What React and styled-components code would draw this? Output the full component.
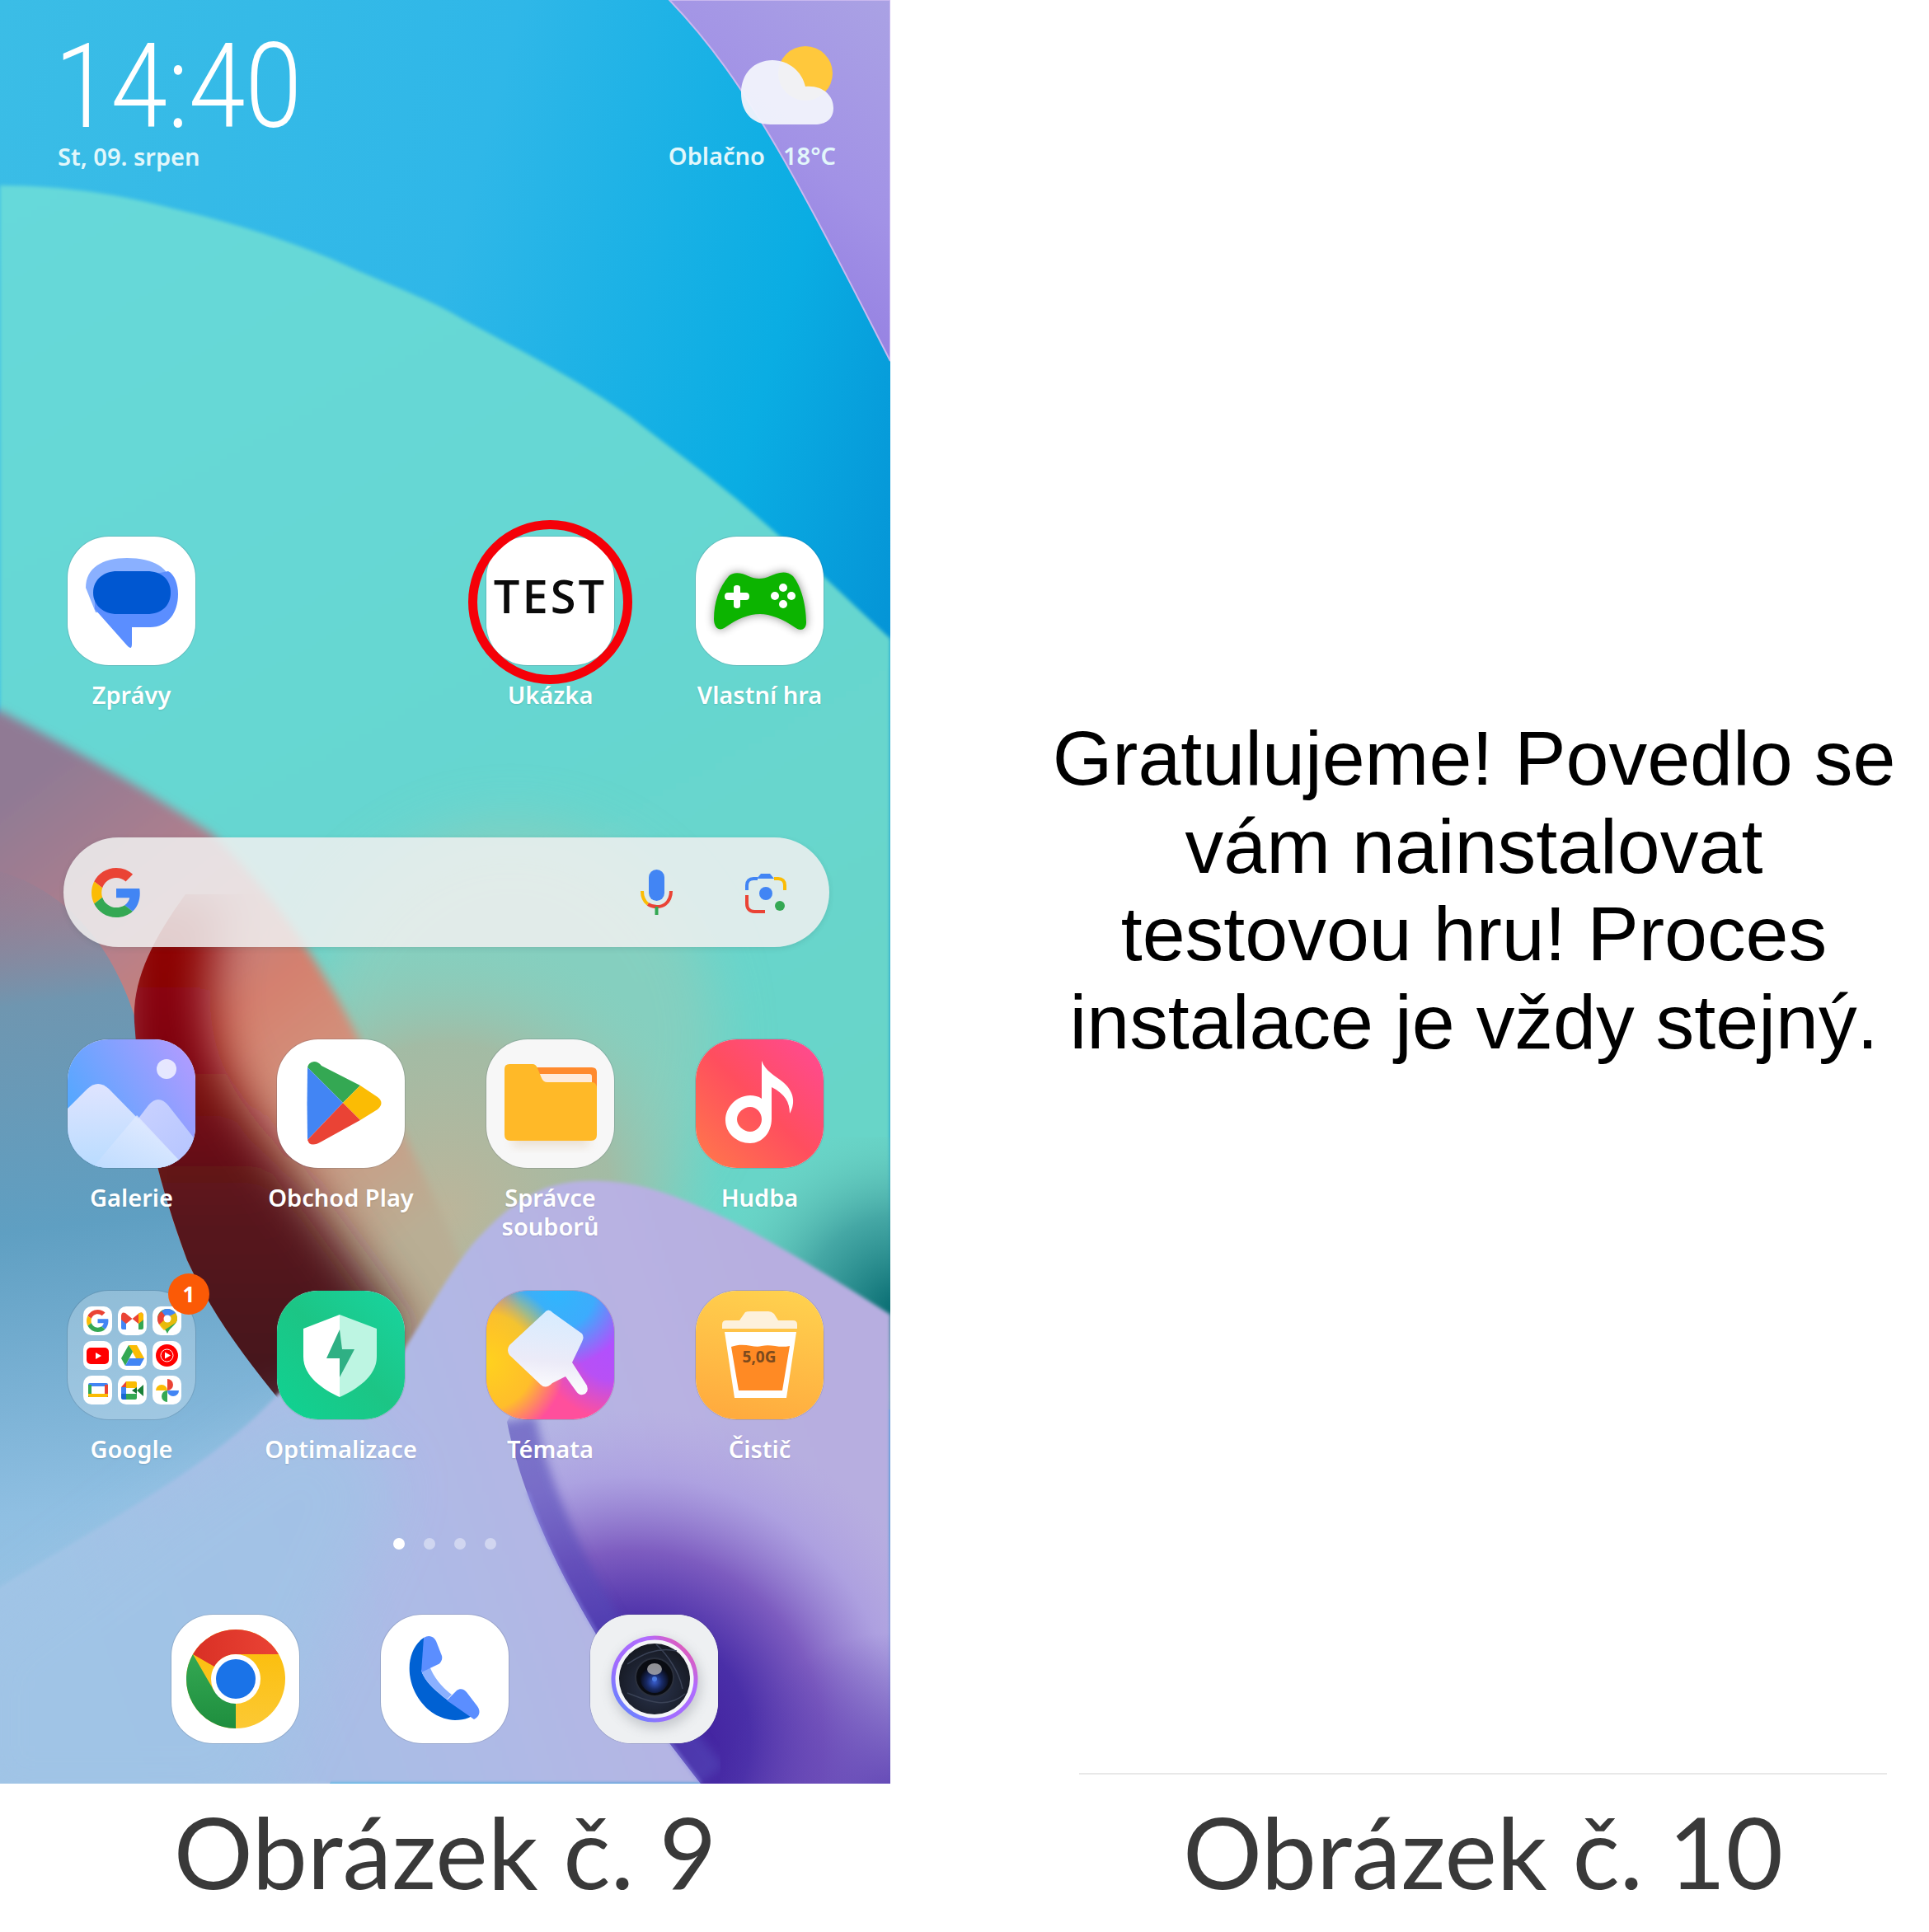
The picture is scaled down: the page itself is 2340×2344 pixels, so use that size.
import React from "react";
import styled, { createGlobalStyle } from "styled-components";

const Global = createGlobalStyle`
  html, body { margin: 0; padding: 0; background: #fff; }
  #root { width: 2340px; height: 2344px; overflow: hidden; }
`;

const Page = styled.div`
  display: grid;
  grid-template-columns: 1080px 1260px;
  width: 2340px;
  height: 2344px;
  background: #fff;
`;
const LeftColumn = styled.div`
  display: flex;
  flex-direction: column;
`;
const RightColumn = styled.div`
  display: flex;
  flex-direction: column;
`;
const Phone = styled.div`
  position: relative;
  width: 1080px;
  height: 2164px;
  overflow: hidden;
  font-family: "Noto Sans", sans-serif;
`;
const WallpaperSvg = styled.svg`
  position: absolute;
  inset: 0;
`;
const Screen = styled.div`
  position: relative;
  display: flex;
  flex-direction: column;
  height: 100%;
`;
const Header = styled.header`
  display: flex;
  justify-content: space-between;
  height: 651px;
  padding: 0 66px 0 66px;
  box-sizing: border-box;
`;
const ClockBlock = styled.div`
  display: flex;
  flex-direction: column;
  padding-top: 46px;
`;
const Clock = styled.div`
  font-family: Roboto, sans-serif;
  font-weight: 300;
  font-size: 142px;
  line-height: 120px;
  height: 120px;
  color: #fff;
  transform: scaleX(0.87);
  transform-origin: left center;
  white-space: nowrap;
`;
const SmallInfo = styled.div`
  font-size: 29px;
  font-weight: 600;
  line-height: 36px;
  color: #e2f7fb;
  white-space: nowrap;
`;
const DateLine = styled(SmallInfo)`
  margin: 6px 0 0 4px;
`;
const WeatherBlock = styled.div`
  display: flex;
  flex-direction: column;
  align-items: flex-end;
  padding-top: 53px;
`;
const WeatherIcon = styled.svg`
  width: 120px;
  height: 100px;
  margin-right: -3px;
`;
const WeatherText = styled.div`
  display: flex;
  gap: 22px;
  margin-top: 18px;
`;
const AppGrid = styled.div`
  display: grid;
  grid-template-columns: repeat(4, 155px);
  column-gap: 99px;
  padding-left: 82px;
`;
const TopGrid = styled(AppGrid)`
  height: 365px;
`;
const MainGrid = styled(AppGrid)`
  grid-auto-rows: 305px;
  margin-top: 112px;
  height: 605px;
`;
const Cell = styled.div`
  display: flex;
  flex-direction: column;
  align-items: center;
`;
const Tile = styled.div`
  position: relative;
  width: 155px;
  height: 156px;
  border-radius: 50px;
  background: ${(p) => p.$bg || "#fff"};
  flex: none;
  box-shadow: 0 0 0 1px rgba(60, 70, 90, 0.18);
`;
const TileSvg = styled.svg`
  display: block;
  width: 155px;
  height: 156px;
  border-radius: 50px;
`;
const Label = styled.div`
  margin-top: 18px;
  font-size: 29px;
  font-weight: 600;
  line-height: 35px;
  color: #fff;
  text-align: center;
  white-space: nowrap;
  text-shadow: 0 1px 2px rgba(0, 0, 0, 0.12);
`;
const TestMark = styled.div`
  padding-top: 46px;
  font-family: "Open Sans", sans-serif;
  font-size: 56px;
  font-weight: 600;
  line-height: 50px;
  letter-spacing: 3px;
  text-align: center;
  color: #0a0a0a;
`;
const RedRing = styled.div`
  position: absolute;
  left: -22px;
  top: -20px;
  width: 199px;
  height: 199px;
  box-sizing: border-box;
  border: 11px solid #f50008;
  border-radius: 50%;
`;
const SearchBar = styled.div`
  display: flex;
  align-items: center;
  width: 929px;
  height: 133px;
  margin-left: 77px;
  padding: 0 52px 0 34px;
  box-sizing: border-box;
  border-radius: 67px;
  background: rgba(240, 240, 240, 0.86);
  box-shadow: 0 2px 6px rgba(40, 80, 80, 0.15);
`;
const SearchSpacer = styled.div`
  flex: 1;
`;
const SearchGap = styled.div`
  width: 88px;
`;
const FolderTile = styled(Tile)`
  display: grid;
  grid-template-columns: repeat(3, 35px);
  grid-auto-rows: 35px;
  gap: 7px;
  padding: 19px 0 0 19px;
  box-sizing: border-box;
  background: rgba(225, 235, 245, 0.32);
`;
const MiniTile = styled.div`
  display: flex;
  align-items: center;
  justify-content: center;
  width: 35px;
  height: 35px;
  border-radius: 10px;
  background: #fff;
`;
const Badge = styled.div`
  position: absolute;
  left: 122px;
  top: -21px;
  width: 50px;
  height: 50px;
  border-radius: 50%;
  background: #fb5a06;
  color: #fff;
  font-size: 26px;
  font-weight: 700;
  line-height: 50px;
  text-align: center;
`;
const Pager = styled.div`
  display: flex;
  gap: 23px;
  height: 14px;
  padding-left: 477px;
`;
const Dot = styled.div`
  width: 14px;
  height: 14px;
  border-radius: 50%;
  background: ${(p) => (p.$active ? "#fff" : "rgba(255,255,255,0.42)")};
`;
const Dock = styled.div`
  display: grid;
  grid-template-columns: repeat(3, 155px);
  column-gap: 99px;
  margin-top: 79px;
  padding-left: 208px;
`;
const Caption = styled.div`
  font-family: Lato, sans-serif;
  font-size: 120px;
  font-weight: 400;
  line-height: 164px;
  color: #393939;
  text-align: center;
  white-space: nowrap;
`;
const RightCanvas = styled.div`
  height: 2164px;
  display: flex;
  flex-direction: column;
`;
const Message = styled.div`
  margin: 867px 0 0 163px;
  width: 1090px;
  font-family: "Liberation Sans", Arial, sans-serif;
  font-size: 93.4px;
  line-height: 106.5px;
  color: #000;
  text-align: center;
  white-space: nowrap;
`;
const Divider = styled.div`
  margin: auto 0 11px 229px;
  width: 980px;
  height: 2px;
  background: #e8e8e8;
`;
const RightCaption = styled(Caption)`
  padding-left: 178px;
`;

const Wallpaper = () => (
  <WallpaperSvg width="1080" height="2164" viewBox="0 0 1080 2164">
    <defs>
      <linearGradient id="wpBase" x1="0" y1="0" x2="1" y2="0.55">
        <stop offset="0" stopColor="#3bbde6" />
        <stop offset="0.45" stopColor="#2fb7e8" />
        <stop offset="0.75" stopColor="#0aade3" />
        <stop offset="1" stopColor="#0288d0" />
      </linearGradient>
      <linearGradient id="wpPurple" x1="1" y1="0" x2="0.5" y2="1">
        <stop offset="0" stopColor="#aaa2e4" />
        <stop offset="0.5" stopColor="#a292e6" />
        <stop offset="1" stopColor="#8f78e0" />
      </linearGradient>
      <linearGradient id="wpTeal" x1="0" y1="0" x2="0.4" y2="1">
        <stop offset="0" stopColor="#66d9da" />
        <stop offset="0.5" stopColor="#66d7d2" />
        <stop offset="1" stopColor="#68d5c8" />
      </linearGradient>
      <linearGradient id="wpLobe" gradientUnits="userSpaceOnUse" x1="60" y1="930" x2="500" y2="1500">
        <stop offset="0" stopColor="#907a94" />
        <stop offset="0.3" stopColor="#b5808c" />
        <stop offset="0.52" stopColor="#d4806e" />
        <stop offset="0.72" stopColor="#d2957f" />
        <stop offset="1" stopColor="#b9ae94" />
      </linearGradient>
      <radialGradient id="wpTan" gradientUnits="userSpaceOnUse" cx="540" cy="1470" r="340">
        <stop offset="0" stopColor="#bcb59a" />
        <stop offset="0.6" stopColor="#a8b8a0" stopOpacity="0.85" />
        <stop offset="1" stopColor="#8ccfbc" stopOpacity="0" />
      </radialGradient>
      <linearGradient id="wpDark" gradientUnits="userSpaceOnUse" x1="0" y1="1130" x2="0" y2="1680">
        <stop offset="0" stopColor="#900003" />
        <stop offset="0.3" stopColor="#7c060c" />
        <stop offset="0.6" stopColor="#5a161c" />
        <stop offset="1" stopColor="#44181f" />
      </linearGradient>
      <linearGradient id="wpBlue" gradientUnits="userSpaceOnUse" x1="0" y1="1040" x2="140" y2="2164">
        <stop offset="0" stopColor="#7f7f98" stopOpacity="0" />
        <stop offset="0.16" stopColor="#6f96b0" />
        <stop offset="0.4" stopColor="#5f9fc2" />
        <stop offset="0.7" stopColor="#8fbfe2" />
        <stop offset="1" stopColor="#a6c8e6" />
      </linearGradient>
      <linearGradient id="wpLav" gradientUnits="userSpaceOnUse" x1="100" y1="2000" x2="1000" y2="1700">
        <stop offset="0" stopColor="#a0c4e6" />
        <stop offset="0.45" stopColor="#aebae6" />
        <stop offset="0.8" stopColor="#b8b2e2" />
        <stop offset="1" stopColor="#b7aee0" />
      </linearGradient>
      <radialGradient id="wpFold" gradientUnits="userSpaceOnUse" cx="770" cy="2110" r="400">
        <stop offset="0" stopColor="#3a1496" />
        <stop offset="0.35" stopColor="#4a2fa8" />
        <stop offset="0.57" stopColor="#7d5cc0" />
        <stop offset="0.8" stopColor="#a99ae0" stopOpacity="0.7" />
        <stop offset="1" stopColor="#b2a2e2" stopOpacity="0" />
      </radialGradient>
      <radialGradient id="wpFoldCorner" gradientUnits="userSpaceOnUse" cx="1090" cy="2200" r="220">
        <stop offset="0" stopColor="#5a3cb0" />
        <stop offset="1" stopColor="#5a3cb0" stopOpacity="0" />
      </radialGradient>
      <radialGradient id="wpDeepTeal" gradientUnits="userSpaceOnUse" cx="1090" cy="1590" r="230">
        <stop offset="0" stopColor="#05696f" />
        <stop offset="0.5" stopColor="#3c9c9c" stopOpacity="0.8" />
        <stop offset="1" stopColor="#6fcdbd" stopOpacity="0" />
      </radialGradient>
      <filter id="blurS"><feGaussianBlur stdDeviation="2" /></filter>
      <filter id="blurE" x="-10%" y="-10%" width="120%" height="120%"><feGaussianBlur stdDeviation="6" /></filter>
      <filter id="blurM" x="-30%" y="-30%" width="160%" height="160%"><feGaussianBlur stdDeviation="28" /></filter>
      <filter id="blurL" x="-30%" y="-30%" width="160%" height="160%"><feGaussianBlur stdDeviation="34" /></filter>
      <clipPath id="clipDark"><path d="M225,1085 C185,1140 160,1190 163,1240 C170,1340 190,1430 227,1529 C260,1600 300,1650 340,1700 L620,1700 L620,1085 Z" /></clipPath>
      <clipPath id="clipFold"><path d="M615,1725 C640,1850 720,2000 850,2164 L1080,2164 L1080,1560 L700,1560 Z" /></clipPath>
    </defs>
    <rect width="1080" height="2164" fill="url(#wpBase)" />
    <path d="M812,0 C860,50 900,105 951,194 C1000,280 1040,360 1080,438 L1080,0 Z" fill="url(#wpPurple)" stroke="#c9b8ef" strokeWidth="2" />
    <path
      d="M0,225 C80,225 150,237 210,253 C290,272 360,295 420,322 C470,345 515,360 561,387 C640,430 700,460 764,505 C815,545 865,580 913,622 C960,662 1000,700 1040,738 L1080,775 L1080,1700 L0,1700 Z"
      fill="url(#wpTeal)"
      filter="url(#blurS)"
    />
    <rect x="860" y="1380" width="300" height="330" fill="url(#wpDeepTeal)" />
    <ellipse cx="620" cy="1260" rx="250" ry="260" fill="#8fcdbb" opacity="0.75" filter="url(#blurL)" />
    <rect x="200" y="1130" width="680" height="680" fill="url(#wpTan)" />
    <path
      d="M0,862 C110,920 180,960 255,1010 C330,1080 390,1170 433,1256 C470,1340 520,1430 560,1530 L490,1660 L330,1720 L-20,1720 L-20,862 Z"
      fill="url(#wpLobe)"
      filter="url(#blurE)"
    />
    <path
      d="M-40,1050 C60,1060 130,1130 163,1232 C170,1340 190,1430 227,1529 C260,1600 300,1650 340,1690 L560,1800 L400,2164 L-40,2164 Z"
      fill="url(#wpBlue)"
    />
    <g clipPath="url(#clipDark)">
      <path d="M140,1090 L275,1090 C245,1190 245,1270 300,1345 C350,1420 410,1500 490,1610 L430,1760 L140,1760 Z" fill="url(#wpDark)" filter="url(#blurM)" />
    </g>
    <path
      d="M-40,2164 L-40,1950 C120,1850 260,1780 340,1688 C380,1720 440,1720 490,1638 C520,1590 545,1545 572,1511 C600,1480 620,1460 660,1442 C690,1432 715,1431 745,1434 C790,1438 830,1455 880,1478 C930,1502 1010,1550 1080,1595 L1080,2164 Z"
      fill="url(#wpLav)"
      filter="url(#blurS)"
    />
    <path d="M-40,2000 C120,1880 280,1760 380,1700 L480,1800 L300,2200 L-40,2200 Z" fill="#a0c4e6" opacity="0.7" filter="url(#blurL)" />
    <g clipPath="url(#clipFold)">
      <rect x="600" y="1560" width="480" height="604" fill="url(#wpFold)" />
      <rect x="850" y="1960" width="240" height="204" fill="url(#wpFoldCorner)" />
      <path d="M615,1725 C640,1850 720,2000 850,2164" fill="none" stroke="#5548b8" strokeWidth="70" opacity="0.6" filter="url(#blurE)" />
    </g>
    <path d="M640,1810 C670,1900 740,2020 850,2164" fill="none" stroke="#8f8fe6" strokeWidth="3" opacity="0.7" filter="url(#blurS)" />
  </WallpaperSvg>
);

const GoogleG = ({ size = 48 }) => (
  <svg width={size} height={size} viewBox="0 0 48 48">
    <path fill="#EA4335" d="M24 9.5c3.54 0 6.71 1.22 9.21 3.6l6.85-6.85C35.9 2.38 30.47 0 24 0 14.62 0 6.51 5.38 2.56 13.22l7.98 6.19C12.43 13.72 17.74 9.5 24 9.5z" />
    <path fill="#4285F4" d="M46.98 24.55c0-1.57-.15-3.09-.38-4.55H24v9.02h12.94c-.58 2.96-2.26 5.48-4.78 7.18l7.73 6c4.51-4.18 7.09-10.36 7.09-17.65z" />
    <path fill="#FBBC05" d="M10.53 28.59c-.48-1.45-.76-2.99-.76-4.59s.27-3.14.76-4.59l-7.98-6.19C.92 16.46 0 20.12 0 24c0 3.88.92 7.54 2.56 10.78l7.97-6.19z" />
    <path fill="#34A853" d="M24 48c6.48 0 11.93-2.13 15.89-5.81l-7.73-6c-2.15 1.45-4.92 2.3-8.16 2.3-6.26 0-11.57-4.22-13.47-9.91l-7.98 6.19C6.51 42.62 14.62 48 24 48z" />
  </svg>
);

const Mic = () => (
  <svg width="39" height="55" viewBox="0 0 39 55">
    <rect x="10" y="0" width="19" height="38" rx="9.5" fill="#4285F4" />
    <path d="M2,26 C2,34 5,39 9,42" fill="none" stroke="#FBBC05" strokeWidth="4" />
    <path d="M9,42 C15,46 25,46 30,42 C35,38 37,33 37,26" fill="none" stroke="#EA4335" strokeWidth="4" />
    <rect x="17.5" y="45" width="4" height="10" fill="#34A853" />
  </svg>
);

const Lens = () => (
  <svg width="50" height="50" viewBox="0 0 50 50">
    <path d="M2,22 V16 C2,11 5,8 10,8 H15" fill="none" stroke="#4285F4" strokeWidth="4" />
    <path d="M14,8 L19,2 H30 L35,8 Z" fill="#4285F4" />
    <path d="M35,8 H40 C45,8 48,11 48,16 V22" fill="none" stroke="#FBBC05" strokeWidth="4" />
    <path d="M2,28 V38 C2,44 5,48 11,48 H24" fill="none" stroke="#EA4335" strokeWidth="4" />
    <circle cx="25" cy="26" r="8" fill="#4285F4" />
    <circle cx="42" cy="41" r="6" fill="#34A853" />
  </svg>
);

const MessagesArt = () => (
  <TileSvg viewBox="0 0 155 156">
    <path d="M22,62 C22,38 42,26 72,26 C104,26 125,38 125,60 L110,92 L34,92 Z" fill="#8ab0ff" />
    <path d="M33,88 L72,132 Q78,139 78,130 L78,110 L100,110 C122,110 134,92 134,70 C134,58 130,46 122,42 L33,60 Z" fill="#5b8eff" />
    <path d="M31,68 C31,52 44,42 60,42 H96 C114,42 125,52 125,68 C125,84 114,94 96,94 H60 C44,94 31,84 31,68 Z" fill="#0057d1" />
  </TileSvg>
);

const GameArt = () => (
  <TileSvg viewBox="0 0 155 156">
    <defs>
      <filter id="gameShadow" x="-20%" y="-30%" width="140%" height="160%"><feGaussianBlur stdDeviation="6" /></filter>
    </defs>
    <path d="M22,100 C22,80 28,62 40,48 C46,42 56,44 64,48 C72,52 82,52 90,48 C98,44 110,40 118,48 C128,60 134,84 134,104 C134,112 128,116 120,110 C106,100 90,94 78,94 C64,94 50,100 36,110 C28,116 22,110 22,100 Z" fill="#000" opacity="0.45" filter="url(#gameShadow)" />
    <path d="M22,100 C22,80 28,62 40,48 C46,42 56,44 64,48 C72,52 82,52 90,48 C98,44 110,40 118,48 C128,60 134,84 134,104 C134,112 128,116 120,110 C106,100 90,94 78,94 C64,94 50,100 36,110 C28,116 22,110 22,100 Z" fill="#0cb400" />
    <path d="M46,62 V68 H39 Q35,68 35,72.5 Q35,77 39,77 H46 V84 Q46,87 50,87 Q54,87 54,84 V77 H61 Q65,77 65,72.5 Q65,68 61,68 H54 V62 Q54,59 50,59 Q46,59 46,62 Z" fill="#fff" />
    <circle cx="106" cy="62" r="5" fill="#fff" />
    <circle cx="106" cy="82" r="5" fill="#fff" />
    <circle cx="96" cy="72" r="5" fill="#fff" />
    <circle cx="116" cy="72" r="5" fill="#fff" />
  </TileSvg>
);

const GalleryArt = () => (
  <TileSvg viewBox="0 0 155 156">
    <defs>
      <linearGradient id="galBg" x1="0" y1="0.6" x2="1" y2="0">
        <stop offset="0" stopColor="#4fa8ff" />
        <stop offset="1" stopColor="#b89aff" />
      </linearGradient>
      <linearGradient id="galM1" x1="0" y1="0" x2="0" y2="1">
        <stop offset="0" stopColor="#dfe4ff" />
        <stop offset="1" stopColor="#b9dcff" />
      </linearGradient>
      <linearGradient id="galM2" x1="0" y1="0" x2="1" y2="1">
        <stop offset="0" stopColor="#cdd4ff" />
        <stop offset="1" stopColor="#b4c4ff" />
      </linearGradient>
      <linearGradient id="galM3" x1="1" y1="0" x2="0" y2="1">
        <stop offset="0" stopColor="#eef0ff" />
        <stop offset="1" stopColor="#c0dcff" />
      </linearGradient>
    </defs>
    <rect width="155" height="156" fill="url(#galBg)" />
    <ellipse cx="120" cy="36" rx="12" ry="12" fill="#fff" opacity="0.75" />
    <path d="M155,122 L122,80 Q110,66 98,80 L60,130 L90,156 L155,156 Z" fill="url(#galM2)" />
    <path d="M0,84 L24,60 Q37,48 50,60 L144,156 L0,156 Z" fill="url(#galM1)" />
    <path d="M84,92 L144,156 L30,156 Z" fill="url(#galM3)" opacity="0.8" />
  </TileSvg>
);

const PlayArt = () => (
  <TileSvg viewBox="0 0 155 156">
    <path d="M37,34 Q38,28 45,27 Q50,27 54,32 L101,56 L80,77 Z" fill="#34a853" />
    <path d="M37,34 L80,77 L37,122 Q36,78 37,34 Z" fill="#4285f4" />
    <path d="M101,56 L122,70 Q131,77 122,85 L101,98 L80,77 Z" fill="#fbbc04" />
    <path d="M37,122 L80,77 L101,98 L54,124 Q44,130 39,126 Z" fill="#ea4335" />
  </TileSvg>
);

const FilesArt = () => (
  <TileSvg viewBox="0 0 155 156">
    <defs>
      <filter id="fileShadow" x="-20%" y="-20%" width="140%" height="150%"><feGaussianBlur stdDeviation="6" /></filter>
    </defs>
    <rect x="32" y="104" width="92" height="26" fill="#c9a070" opacity="0.25" filter="url(#fileShadow)" />
    <path d="M50,34 H128 Q134,34 134,40 V70 H50 Z" fill="#ff8a2e" />
    <rect x="62" y="42" width="66" height="30" rx="3" fill="#ffeadb" />
    <path d="M28,30 H56 Q60,30 62,35 L67,47 Q69,52 74,52 H128 Q134,52 134,60 V116 Q134,123 127,123 H29 Q22,123 22,116 V36 Q22,30 28,30 Z" fill="#ffb928" />
  </TileSvg>
);

const MusicArt = () => (
  <TileSvg viewBox="0 0 155 156">
    <defs>
      <linearGradient id="musBg" x1="0" y1="1" x2="1" y2="0">
        <stop offset="0" stopColor="#ff7a4a" />
        <stop offset="0.5" stopColor="#ff4e5e" />
        <stop offset="1" stopColor="#ff4a96" />
      </linearGradient>
    </defs>
    <rect width="155" height="156" fill="url(#musBg)" />
    <path fillRule="evenodd" d="M80,26 C84,38 96,44 106,52 C118,62 122,76 114,90 C114,76 108,66 92,58 L92,96 C92,114 80,126 66,126 C50,126 36,114 36,98 C36,82 50,68 66,68 C71,68 76,69 80,72 Z M66,82 C58,82 50,89 50,97 C50,105 58,112 66,112 C74,112 80,105 80,97 C80,89 74,82 66,82 Z" fill="#fff" />
  </TileSvg>
);

const ShieldArt = () => (
  <TileSvg viewBox="0 0 155 156">
    <defs>
      <linearGradient id="shBg" x1="0" y1="1" x2="1" y2="0">
        <stop offset="0" stopColor="#0fd393" />
        <stop offset="0.5" stopColor="#1cc585" />
        <stop offset="1" stopColor="#18d5a0" />
      </linearGradient>
    </defs>
    <rect width="155" height="156" fill="url(#shBg)" />
    <path d="M76,29 L32,46 V80 C32,104 56,120 76,129 Z" fill="#fff" />
    <path d="M76,29 L121,46 V80 C121,104 96,120 76,129 Z" fill="#bdf5e2" />
    <path d="M76,47 L60,82 H76 V105 L94,71 H79 Z" fill="#2fb084" />
  </TileSvg>
);

const ThemesArt = () => (
  <TileSvg viewBox="0 0 155 156">
    <defs>
      <radialGradient id="thY" cx="0" cy="0.55" r="0.62">
        <stop offset="0" stopColor="#ffd21e" />
        <stop offset="0.6" stopColor="#ffca1e" stopOpacity="0.9" />
        <stop offset="1" stopColor="#ffca1e" stopOpacity="0" />
      </radialGradient>
      <radialGradient id="thB" cx="0.55" cy="0" r="0.6">
        <stop offset="0" stopColor="#2eb6ff" />
        <stop offset="0.5" stopColor="#2eb6ff" stopOpacity="0.9" />
        <stop offset="1" stopColor="#2eb6ff" stopOpacity="0" />
      </radialGradient>
      <radialGradient id="thP" cx="1" cy="0.4" r="0.6">
        <stop offset="0" stopColor="#b050ff" />
        <stop offset="0.5" stopColor="#b050ff" stopOpacity="0.9" />
        <stop offset="1" stopColor="#b050ff" stopOpacity="0" />
      </radialGradient>
      <linearGradient id="thBrush" x1="0.5" y1="0" x2="0.4" y2="1">
        <stop offset="0" stopColor="#d6ecff" />
        <stop offset="0.6" stopColor="#ecebf8" />
        <stop offset="1" stopColor="#fff" />
      </linearGradient>
    </defs>
    <rect width="155" height="156" fill="#ff4f9c" />
    <rect width="155" height="156" fill="url(#thP)" />
    <rect width="155" height="156" fill="url(#thB)" />
    <rect width="155" height="156" fill="url(#thY)" />
    <path d="M70,27 Q75,20 81,27 L116,52 Q119,56 116,62 L104,87 L122,115 Q125,124 117,126 Q112,127 109,122 L96,104 L80,112 Q72,120 66,114 L28,78 Q24,72 28,66 Z" fill="url(#thBrush)" />
  </TileSvg>
);

const CleanerCup = styled.text`
  font-family: "Noto Sans", sans-serif;
  font-size: 19px;
  font-weight: 700;
  fill: #7c4a1e;
`;

const CleanerArt = () => (
  <TileSvg viewBox="0 0 155 156">
    <defs>
      <linearGradient id="clBg" x1="0.6" y1="0" x2="0.4" y2="1">
        <stop offset="0" stopColor="#ffd04e" />
        <stop offset="1" stopColor="#ffab3e" />
      </linearGradient>
    </defs>
    <rect width="155" height="156" fill="url(#clBg)" />
    <path d="M53,36 L60,26 Q62,25 66,25 H88 Q92,25 95,28 L100,36 H118 Q123,36 123,41 V46 H32 V41 Q32,36 37,36 Z" fill="#fdf1dc" />
    <path d="M35,50 H122 L110,130 H47 Z" fill="#fff" />
    <path d="M43,68 C60,62 70,70 80,67 C92,64 100,70 114,67 L105,121 H52 Z" fill="#ff8a24" />
    <CleanerCup x="77" y="87" textAnchor="middle">5,0G</CleanerCup>
  </TileSvg>
);

const ChromeArt = () => (
  <TileSvg viewBox="0 0 155 156">
    <defs>
      <linearGradient id="chR" x1="0" y1="0" x2="1" y2="0">
        <stop offset="0" stopColor="#d93025" />
        <stop offset="1" stopColor="#ea4335" />
      </linearGradient>
      <linearGradient id="chG" x1="0.3" y1="1" x2="0.3" y2="0">
        <stop offset="0" stopColor="#1e8e3e" />
        <stop offset="1" stopColor="#34a853" />
      </linearGradient>
      <linearGradient id="chY" x1="0.5" y1="1" x2="0.5" y2="0">
        <stop offset="0" stopColor="#fcc934" />
        <stop offset="1" stopColor="#fbbc04" />
      </linearGradient>
    </defs>
    <circle cx="78" cy="78" r="60" fill="url(#chY)" />
    <path d="M78,18 A60,60 0 0 1 130,48 L78,48 A30,30 0 0 0 52,63 L26,48 A60,60 0 0 1 78,18 Z" fill="url(#chR)" />
    <path d="M26,48 L52,93 L78,108 L78,138 A60,60 0 0 1 26,48 Z" fill="url(#chG)" />
    <circle cx="78" cy="78" r="30" fill="#fff" />
    <circle cx="78" cy="78" r="24" fill="#1a73e8" />
  </TileSvg>
);

const PhoneArt = () => (
  <TileSvg viewBox="0 0 155 156">
    <path d="M52,28 C40,36 33,52 35,72 C38,100 60,127 90,128 C102,128 112,124 116,118 L80,103 C66,92 54,82 49,68 L56,58 Z" fill="#0061d3" />
    <path d="M49,68 C54,82 66,92 80,103 L86,97 C74,88 64,76 59,62 Z" fill="#8ab0ff" />
    <path d="M52,28 C58,24 64,26 67,32 L74,50 C75,54 73,58 70,60 L49,70 Z" fill="#5b8eff" />
    <path d="M80,104 L92,92 C96,89 101,90 104,94 L117,111 C122,118 119,124 113,127 Z" fill="#5b8eff" />
  </TileSvg>
);

const CameraArt = () => (
  <TileSvg viewBox="0 0 155 156">
    <defs>
      <linearGradient id="camRing" x1="0" y1="1" x2="1" y2="0">
        <stop offset="0" stopColor="#4f8cff" />
        <stop offset="0.35" stopColor="#a06cff" />
        <stop offset="0.7" stopColor="#b06cff" />
        <stop offset="1" stopColor="#ff4f8e" />
      </linearGradient>
      <radialGradient id="camLens" cx="0.5" cy="0.6" r="0.6">
        <stop offset="0" stopColor="#2b3550" />
        <stop offset="1" stopColor="#151820" />
      </radialGradient>
      <radialGradient id="camGlass" cx="0.5" cy="0.6" r="0.55">
        <stop offset="0" stopColor="#3a5fd0" />
        <stop offset="0.5" stopColor="#182a66" />
        <stop offset="1" stopColor="#080a14" />
      </radialGradient>
      <filter id="camShadow" x="-30%" y="-30%" width="160%" height="160%"><feGaussianBlur stdDeviation="7" /></filter>
    </defs>
    <rect width="155" height="156" fill="#eef0f2" />
    <circle cx="80" cy="84" r="54" fill="#8a8f98" opacity="0.4" filter="url(#camShadow)" />
    <circle cx="78" cy="78" r="50" fill="#f4f5f7" stroke="url(#camRing)" strokeWidth="5" />
    <circle cx="78" cy="78" r="43" fill="url(#camLens)" />
    <path d="M45,60 C60,50 80,38 105,44 M45,95 C60,100 90,118 115,96 M80,36 C95,50 108,70 112,90" fill="none" stroke="#3a4256" strokeWidth="1.5" />
    <circle cx="78" cy="76" r="23" fill="#0a0c12" stroke="#2a2f3c" strokeWidth="2" />
    <circle cx="78" cy="78" r="17" fill="url(#camGlass)" />
    <ellipse cx="78" cy="66" rx="9" ry="7" fill="#a8a8ac" opacity="0.85" />
    <circle cx="78" cy="78" r="3" fill="#4a7ae0" />
  </TileSvg>
);

const Mini = {
  Gmail: () => (
    <svg width="27" height="21" viewBox="0 0 27 21">
      <path d="M0,5 V19 Q0,21 2,21 H6 V9 Z" fill="#4285f4" />
      <path d="M27,5 V19 Q27,21 25,21 H21 V9 Z" fill="#34a853" />
      <path d="M0,5 Q0,-1 5,1 L13.5,8 L6,14 L0,9 Z" fill="#ea4335" />
      <path d="M27,5 Q27,-1 22,1 L13.5,8 L21,14 L27,9 Z" fill="#ea4335" />
      <path d="M22,1 Q27,-1 27,5 V9 L21,14 V2 Z" fill="#fbbc04" />
    </svg>
  ),
  Maps: () => (
    <svg width="24" height="30" viewBox="0 0 24 30">
      <path d="M12,0 C19,0 24,5 24,12 C24,19 15,22 12,30 C9,22 0,19 0,12 C0,5 5,0 12,0 Z" fill="#34a853" />
      <path d="M12,0 C16,0 20,2 22,5 L12,14 L5,3 C7,1 9,0 12,0 Z" fill="#4285f4" />
      <path d="M5,3 L12,12 L2,19 C1,17 0,15 0,12 C0,8 2,5 5,3 Z" fill="#ea4335" />
      <path d="M2,19 L12,10 L22,5 C23,7 24,9 24,12 C24,14 23,16 22,17 L8,26 C6,24 4,22 2,19 Z" fill="#fbbc04" opacity="0.9" />
      <circle cx="12" cy="12" r="4.5" fill="#fff" />
    </svg>
  ),
  YouTube: () => (
    <svg width="27" height="20" viewBox="0 0 27 20">
      <rect width="27" height="20" rx="5" fill="#f00" />
      <path d="M11,6 L18,10 L11,14 Z" fill="#fff" />
    </svg>
  ),
  Drive: () => (
    <svg width="28" height="25" viewBox="0 0 28 25">
      <path d="M9,0 H19 L28,16 H18 Z" fill="#fbbc04" />
      <path d="M0,16 L9,0 L14,8 L5,25 Z" fill="#34a853" />
      <path d="M5,25 L10,16 H28 L23,25 Z" fill="#4285f4" />
    </svg>
  ),
  Music: () => (
    <svg width="27" height="27" viewBox="0 0 27 27">
      <circle cx="13.5" cy="13.5" r="13.5" fill="#f00" />
      <circle cx="13.5" cy="13.5" r="7.5" fill="none" stroke="#fff" strokeWidth="1" />
      <path d="M11,9.5 L18,13.5 L11,17.5 Z" fill="#fff" />
    </svg>
  ),
  TV: () => (
    <svg width="26" height="19" viewBox="0 0 26 19">
      <path d="M1,3 Q1,1 3,1 H23 Q25,1 25,3 V5 H1 Z" fill="#4285f4" />
      <path d="M1,3 V18 H5 V3 Z" fill="#34a853" />
      <path d="M21,3 H25 V18 H21 Z" fill="#ea4335" />
      <path d="M1,14 H25 V16 Q25,18 23,18 H3 Q1,18 1,16 Z" fill="#fbbc04" />
    </svg>
  ),
  Meet: () => (
    <svg width="27" height="22" viewBox="0 0 27 22">
      <path d="M6,0 H17 Q19,0 19,2 V8 H6 Z" fill="#fbbc04" />
      <path d="M6,0 V7 H0 Z" fill="#ea4335" />
      <path d="M0,7 H6 V15 H0 Z" fill="#4285f4" />
      <path d="M0,15 H6 V22 H2 Q0,22 0,20 Z" fill="#1967d2" />
      <path d="M6,15 H19 V20 Q19,22 17,22 H6 Z" fill="#34a853" />
      <path d="M19,11 L27,4 V18 Z" fill="#188038" />
      <path d="M13,11 L19,7 V15 Z" fill="#137333" />
    </svg>
  ),
  Photos: () => (
    <svg width="28" height="28" viewBox="0 0 28 28">
      <path d="M14,14 V0 A7,7 0 0 1 14,14 Z" fill="#ea4335" />
      <path d="M14,14 H28 A7,7 0 0 1 14,14 Z" fill="#4285f4" />
      <path d="M14,14 V28 A7,7 0 0 1 14,14 Z" fill="#34a853" />
      <path d="M14,14 H0 A7,7 0 0 1 14,14 Z" fill="#fbbc04" />
    </svg>
  ),
};

const GoogleFolder = () => (
  <FolderTile>
    <MiniTile><GoogleG size={27} /></MiniTile>
    <MiniTile><Mini.Gmail /></MiniTile>
    <MiniTile><Mini.Maps /></MiniTile>
    <MiniTile><Mini.YouTube /></MiniTile>
    <MiniTile><Mini.Drive /></MiniTile>
    <MiniTile><Mini.Music /></MiniTile>
    <MiniTile><Mini.TV /></MiniTile>
    <MiniTile><Mini.Meet /></MiniTile>
    <MiniTile><Mini.Photos /></MiniTile>
    <Badge>1</Badge>
  </FolderTile>
);

const App2 = ({ art, bg, label }) => (
  <Cell>
    <Tile $bg={bg}>{art}</Tile>
    <Label>{label}</Label>
  </Cell>
);

export default function App() {
  return (
    <>
      <Global />
      <Page>
        <LeftColumn>
          <Phone>
            <Wallpaper />
            <Screen>
              <Header>
                <ClockBlock>
                  <Clock>14:40</Clock>
                  <DateLine>St, 09. srpen</DateLine>
                </ClockBlock>
                <WeatherBlock>
                  <WeatherIcon viewBox="0 0 120 100">
                    <circle cx="80" cy="36" r="33" fill="#ffc83c" />
                    <path d="M38,98 C14,98 2,82 2,60 C2,36 18,20 40,20 C60,20 76,34 80,52 C100,50 114,62 114,78 C114,92 104,98 92,98 Z" fill="#f0f3fc" opacity="0.96" />
                  </WeatherIcon>
                  <WeatherText>
                    <SmallInfo>Oblačno</SmallInfo>
                    <SmallInfo>18°C</SmallInfo>
                  </WeatherText>
                </WeatherBlock>
              </Header>

              <TopGrid>
                <App2 art={<MessagesArt />} label="Zprávy" />
                <div />
                <Cell>
                  <Tile>
                    <TestMark>TEST</TestMark>
                    <RedRing />
                  </Tile>
                  <Label>Ukázka</Label>
                </Cell>
                <App2 art={<GameArt />} label="Vlastní hra" />
              </TopGrid>

              <SearchBar>
                <GoogleG size={60} />
                <SearchSpacer />
                <Mic />
                <SearchGap />
                <Lens />
              </SearchBar>

              <MainGrid>
                <App2 art={<GalleryArt />} label="Galerie" />
                <App2 art={<PlayArt />} label="Obchod Play" />
                <App2 art={<FilesArt />} bg="#f7f7f7" label={<>Správce<br />souborů</>} />
                <App2 art={<MusicArt />} label="Hudba" />
                <Cell>
                  <GoogleFolder />
                  <Label>Google</Label>
                </Cell>
                <App2 art={<ShieldArt />} label="Optimalizace" />
                <App2 art={<ThemesArt />} label="Témata" />
                <App2 art={<CleanerArt />} label="Čistič" />
              </MainGrid>

              <Pager>
                <Dot $active />
                <Dot />
                <Dot />
                <Dot />
              </Pager>

              <Dock>
                <Tile><ChromeArt /></Tile>
                <Tile><PhoneArt /></Tile>
                <Tile><CameraArt /></Tile>
              </Dock>
            </Screen>
          </Phone>
          <Caption>Obrázek č. 9</Caption>
        </LeftColumn>

        <RightColumn>
          <RightCanvas>
            <Message>
              Gratulujeme! Povedlo se
              <br />
              vám nainstalovat
              <br />
              testovou hru! Proces
              <br />
              instalace je vždy stejný.
            </Message>
            <Divider />
          </RightCanvas>
          <RightCaption>Obrázek č. 10</RightCaption>
        </RightColumn>
      </Page>
    </>
  );
}
